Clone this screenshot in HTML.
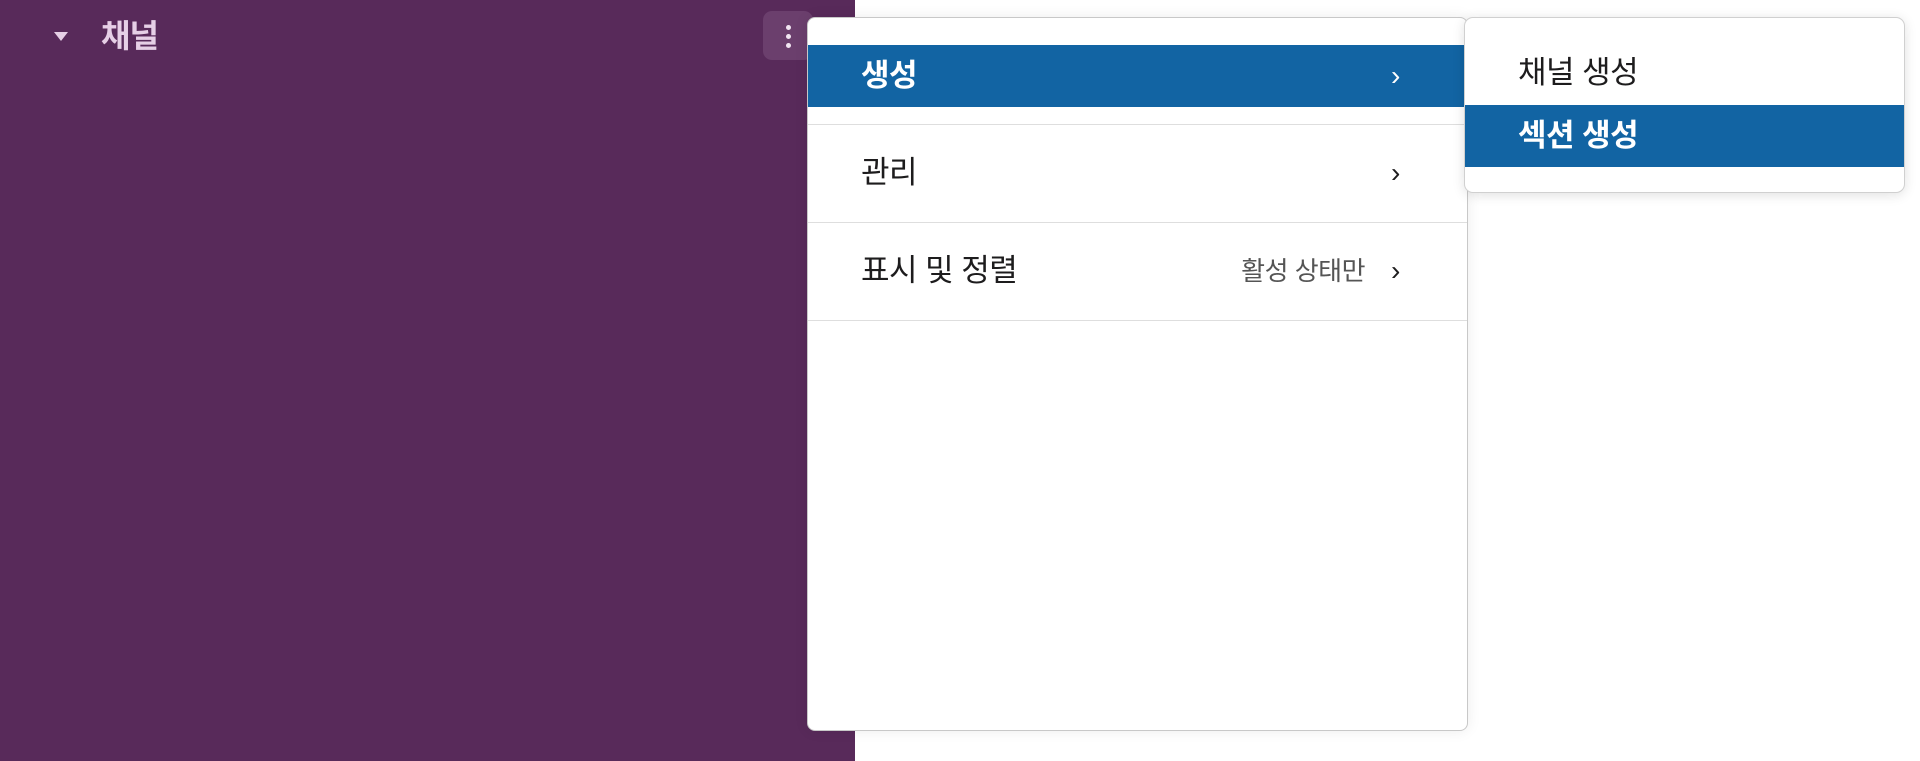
<!DOCTYPE html>
<html><head><meta charset="utf-8"><style>
*{margin:0;padding:0;box-sizing:border-box}
body{width:1920px;height:761px;overflow:hidden;background:#fff;font-family:"Liberation Sans","Noto Sans CJK KR",sans-serif;position:relative}
.side{position:absolute;left:0;top:0;width:855px;height:761px;background:#582a5a}
.tri{position:absolute;left:54px;top:32px;width:0;height:0;border-left:7px solid transparent;border-right:7px solid transparent;border-top:9px solid #e6cfe6}
.ch{position:absolute;left:101px;top:14px;font-size:32px;font-weight:bold;color:#e6cfe6;line-height:44px;letter-spacing:-1px}
.keb{position:absolute;left:763px;top:11px;width:50px;height:49px;background:#6b3f6d;border-radius:9px}
.keb i{position:absolute;left:23px;width:5px;height:5px;border-radius:50%;background:#f2e6f2}
.menu{position:absolute;left:807px;top:17px;width:661px;height:714px;background:#fff;border:1px solid #c8c8c8;border-radius:8px;box-shadow:0 0 14px rgba(0,0,0,.08);overflow:hidden}
.row{position:absolute;left:0;width:100%;height:62px;font-size:31px;color:#1d1c1d;line-height:62px;padding-left:53px;letter-spacing:-0.5px}
.sel{background:#1264a3;color:#fff;font-weight:bold}
.sep{position:absolute;left:0;width:100%;height:1px;background:#dedede}
.chev{position:absolute;left:583px;top:0;font-size:28px;font-weight:normal}
.hint{position:absolute;right:102px;top:0;font-size:26px;color:#555}
.sub{position:absolute;left:1464px;top:17px;width:441px;height:176px;background:#fff;border:1px solid #d0d0d0;border-radius:9px;box-shadow:0 2px 12px rgba(0,0,0,.12);overflow:hidden}
.sub .row{padding-left:53px;height:62px;line-height:62px}
</style></head><body>
<div class="side">
<div class="tri"></div>
<div class="ch">채널</div>
<div class="keb"><i style="top:14px"></i><i style="top:23px"></i><i style="top:32px"></i></div>
</div>
<div class="menu">
<div class="row sel" style="top:27px">생성<span class="chev">›</span></div>
<div class="sep" style="top:106px"></div>
<div class="row" style="top:124px">관리<span class="chev">›</span></div>
<div class="sep" style="top:204px"></div>
<div class="row" style="top:222px">표시 및 정렬<span class="hint">활성 상태만</span><span class="chev">›</span></div>
<div class="sep" style="top:302px"></div>
</div>
<div class="sub">
<div class="row" style="top:24px">채널 생성</div>
<div class="row sel" style="top:87px">섹션 생성</div>
</div>
</body></html>
